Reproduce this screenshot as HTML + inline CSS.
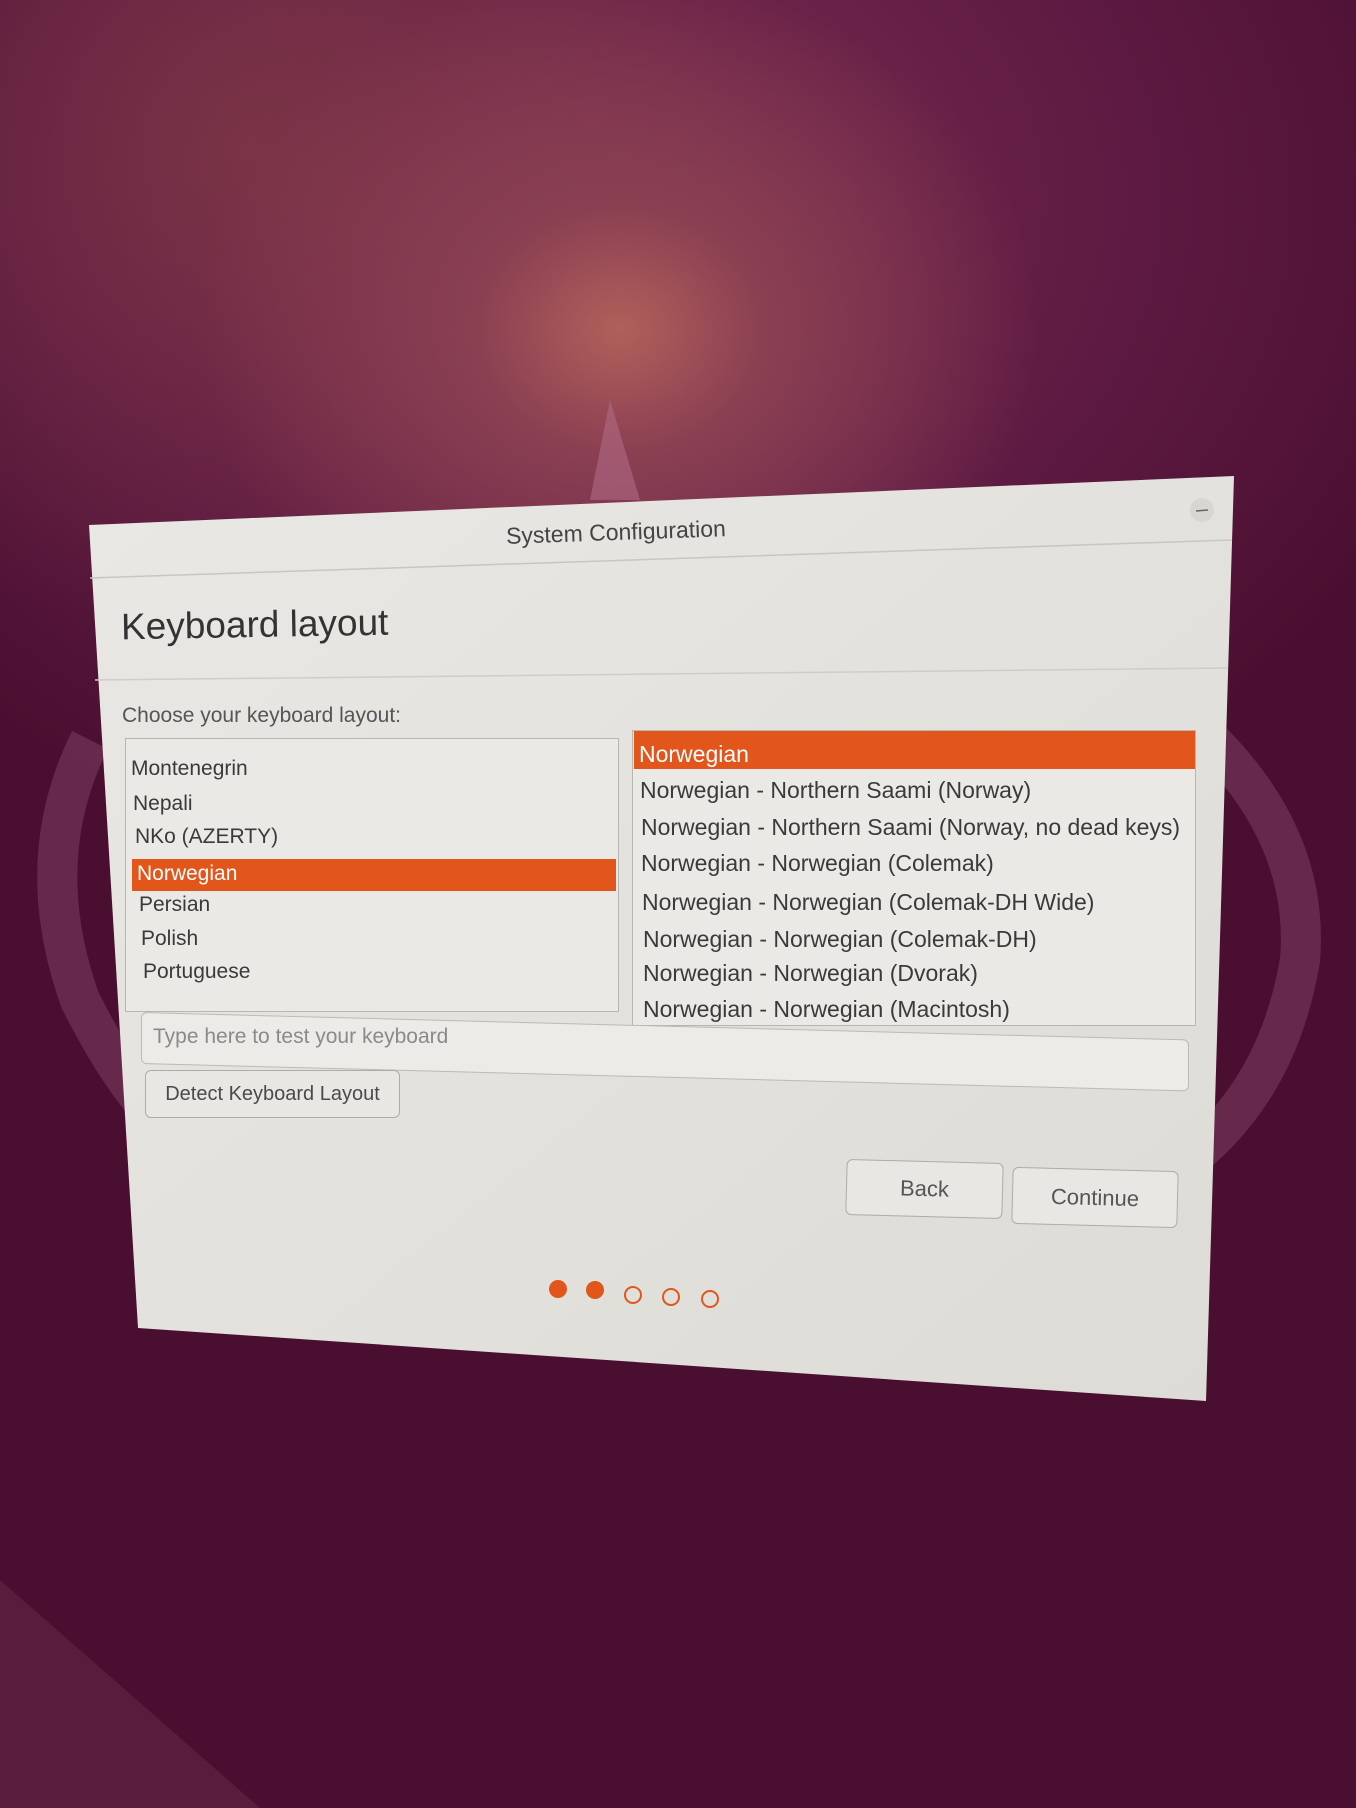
<!DOCTYPE html>
<html><head><meta charset="utf-8"><style>
html,body{margin:0;padding:0}
body{width:1356px;height:1808px;position:relative;overflow:hidden;font-family:"Liberation Sans",sans-serif;
background:radial-gradient(ellipse 420px 360px at 620px 330px,#b0605a 0%,#8a3f52 35%,rgba(110,30,70,0) 100%),
radial-gradient(ellipse 500px 500px at 250px 150px,rgba(130,60,70,0.7) 0%,rgba(110,40,70,0) 100%),
radial-gradient(ellipse 900px 700px at 600px 200px,#7a2e50 0%,#5e1a42 60%,#4a0f30 100%);}
.a{position:absolute;white-space:nowrap;color:#3c3c3c}
.row{position:absolute;white-space:nowrap;color:#3a3a3a;font-size:21px}
.r2{position:absolute;white-space:nowrap;color:#3a3a3a;font-size:23px}
.box{position:absolute;border:1.5px solid #b8b6b2;background:#ebe9e5}
.btn{position:absolute;border:1.5px solid #aeaca8;border-radius:6px;background:#e9e7e3;color:#555;display:flex;align-items:center;justify-content:center}
.dot{position:absolute;width:18px;height:18px;border-radius:50%;box-sizing:border-box}
</style></head><body>
<svg width="1356" height="1808" style="position:absolute;left:0;top:0">
<defs><linearGradient id="g" x1="0" y1="0" x2="1" y2="1"><stop offset="0" stop-color="#eae8e4"/><stop offset="1" stop-color="#dddbd6"/></linearGradient></defs>
<g fill="none" stroke="#8a4a6e" stroke-opacity="0.45">
<path d="M90 740 Q30 860 80 1000 Q120 1080 160 1120" stroke-width="40"/>
<path d="M1210 740 Q1310 840 1300 960 Q1280 1080 1200 1150" stroke-width="40"/>
</g>
<polygon points="610,400 640,500 590,500" fill="#b06a85" opacity="0.6"/>
<polygon points="0,1580 260,1808 0,1808" fill="#6a2a48" opacity="0.5"/>
<polygon points="89,525 1234,476 1206,1401 138,1328" fill="url(#g)"/>
<line x1="90" y1="578" x2="1232" y2="540" stroke="#c8c6c2" stroke-width="1.5"/>
<line x1="95" y1="680" x2="1228" y2="668" stroke="#cfcdc9" stroke-width="1.5"/>
<circle cx="1202" cy="510" r="12" fill="#d8d6d2"/>
<line x1="1196" y1="511" x2="1208" y2="510" stroke="#666" stroke-width="1.5"/>
</svg>
<div class="a" style="left:506px;top:519px;font-size:23px;color:#444;transform:rotate(-2deg)">System Configuration</div>
<div class="a" style="left:121px;top:604px;font-size:37px;color:#333;transform:rotate(-1deg)">Keyboard layout</div>
<div class="a" style="left:122px;top:704px;font-size:21px;color:#555">Choose your keyboard layout:</div>

<div class="box" style="left:125px;top:738px;width:492px;height:272px"></div>
<div class="row" style="left:131px;top:757px">Montenegrin</div>
<div class="row" style="left:133px;top:792px">Nepali</div>
<div class="row" style="left:135px;top:825px">NKo (AZERTY)</div>
<div style="position:absolute;left:132px;top:859px;width:484px;height:32px;background:#e2561c"></div>
<div class="row" style="left:137px;top:862px;color:#fff">Norwegian</div>
<div class="row" style="left:139px;top:893px">Persian</div>
<div class="row" style="left:141px;top:927px">Polish</div>
<div class="row" style="left:143px;top:960px">Portuguese</div>

<div class="box" style="left:632px;top:730px;width:562px;height:294px;overflow:hidden"></div>
<div style="position:absolute;left:634px;top:731px;width:561px;height:38px;background:#e2561c"></div>
<div class="r2" style="left:639px;top:741px;color:#fff">Norwegian</div>
<div class="r2" style="left:640px;top:777px">Norwegian - Northern Saami (Norway)</div>
<div class="r2" style="left:641px;top:814px">Norwegian - Northern Saami (Norway, no dead keys)</div>
<div class="r2" style="left:641px;top:850px">Norwegian - Norwegian (Colemak)</div>
<div class="r2" style="left:642px;top:889px">Norwegian - Norwegian (Colemak-DH Wide)</div>
<div class="r2" style="left:643px;top:926px">Norwegian - Norwegian (Colemak-DH)</div>
<div class="r2" style="left:643px;top:960px">Norwegian - Norwegian (Dvorak)</div>
<div style="position:absolute;left:640px;top:992px;width:550px;height:30px;overflow:hidden"><div class="r2" style="left:3px;top:4px">Norwegian - Norwegian (Macintosh)</div></div>

<div style="position:absolute;left:141px;top:1012px;width:1046px;height:50px;border:1.5px solid #bcbab6;border-radius:6px;background:#ecebe7;transform-origin:0 0;transform:skewY(1.5deg)"></div>
<div class="a" style="left:153px;top:1025px;font-size:21px;color:#8a8a8a">Type here to test your keyboard</div>
<div class="btn" style="left:145px;top:1070px;width:253px;height:46px;font-size:20px;color:#4a4a4a">Detect Keyboard Layout</div>
<div class="btn" style="left:846px;top:1161px;width:155px;height:54px;font-size:22px;transform:rotate(1.5deg)">Back</div>
<div class="btn" style="left:1012px;top:1169px;width:164px;height:55px;font-size:22px;transform:rotate(1.5deg)">Continue</div>

<div class="dot" style="left:549px;top:1280px;background:#e2561c"></div>
<div class="dot" style="left:586px;top:1281px;background:#e2561c"></div>
<div class="dot" style="left:624px;top:1286px;border:2px solid #e2561c"></div>
<div class="dot" style="left:662px;top:1288px;border:2px solid #e2561c"></div>
<div class="dot" style="left:701px;top:1290px;border:2px solid #e2561c"></div>
</body></html>
